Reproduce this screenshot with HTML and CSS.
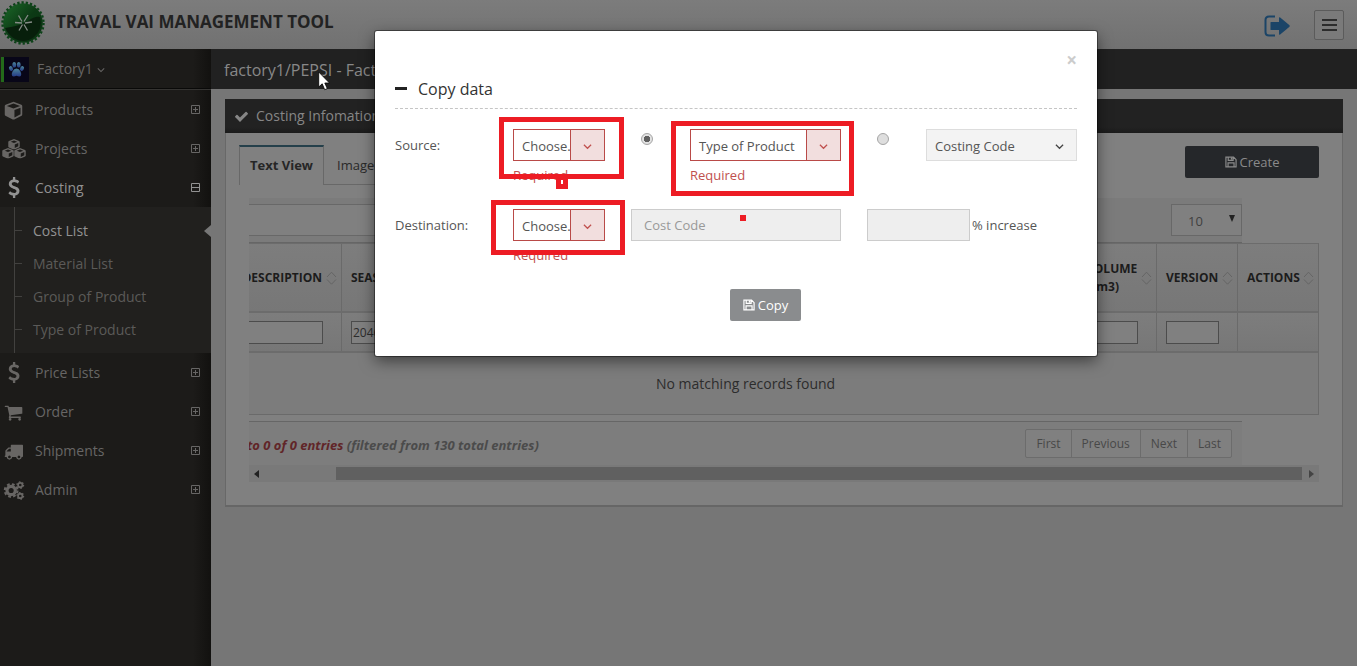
FILE: index.html
```
<!DOCTYPE html>
<html lang="en">
<head>
<meta charset="utf-8">
<title>Traval Vai Management Tool</title>
<link rel="stylesheet" href="styles.css">
</head>
<body>
<svg class="defs" aria-hidden="true">
  <symbol id="usd" viewBox="0 0 1792 1792"><path d="M1362 1185q0 153-99.500 263.500t-258.500 136.500v175q0 14-9 23t-23 9h-135q-13 0-22.500-9.500t-9.500-22.500v-175q-66-9-127.500-31t-101.500-44.500-74-48-46.500-37.500-17.500-18q-17-21-2-41l103-135q7-10 23-12 15-2 24 9l2 2q113 99 243 125 37 8 74 8 81 0 142.500-43t61.500-122q0-28-15-53t-33.500-42-58.500-37.500-66-32-80-32.500q-39-16-61.500-25t-61.500-26.500-62.500-31-56.500-35.500-53.500-42.500-43.500-49-35.500-58-21-66.500-8.500-78q0-138 98-242t255-134v-180q0-13 9.500-22.500t22.500-9.500h135q14 0 23 9t9 23v176q57 6 110.500 23t87 33.500 63.500 37.500 39 29 15 14q17 18 5 38l-81 146q-8 15-23 16-14 3-27-7-3-3-14.500-12t-39-26.500-58.500-32-74.500-26-85.500-11.500q-95 0-155 43t-60 111q0 26 8.500 48t29.500 41.500 39.500 33 56 31 60.500 27 70 27.500q53 20 81 31.500t76 35 75.500 42.500 62 50 53 63.500 31.500 76.500 13 94z"/></symbol>
  <symbol id="cart" viewBox="0 0 1792 1792"><path d="M704 1536q0 52-38 90t-90 38-90-38-38-90 38-90 90-38 90 38 38 90zm896 0q0 52-38 90t-90 38-90-38-38-90 38-90 90-38 90 38 38 90zm128-1088v512q0 24-16.500 42.500t-40.500 21.500l-1044 122q13 60 13 70 0 16-24 64h920q26 0 45 19t19 45-19 45-45 19h-1024q-26 0-45-19t-19-45q0-11 8-31.500t16-36 21.500-40 15.500-29.500l-177-823h-204q-26 0-45-19t-19-45 19-45 45-19h256q16 0 28.500 6.500t19.500 15.500 13 24.500 8 26 5.500 29.500 4.500 26h1201q26 0 45 19t19 45z"/></symbol>
  <symbol id="truck" viewBox="0 0 1792 1792"><path d="M640 1408q0-52-38-90t-90-38-90 38-38 90 38 90 90 38 90-38 38-90zm-384-512h384v-256h-158q-13 0-22 9l-195 195q-9 9-9 22v30zm1280 512q0-52-38-90t-90-38-90 38-38 90 38 90 90 38 90-38 38-90zm256-1088v1024q0 15-4 26.500t-13.500 18.500-16.500 11.500-23.500 6-22.500 2-25.500 0-22.500-.5q0 106-75 181t-181 75-181-75-75-181h-384q0 106-75 181t-181 75-181-75-75-181h-64q-3 0-22.500.5t-25.500 0-22.500-2-23.500-6-16.500-11.500-13.500-18.500-4-26.500q0-26 19-45t45-19v-320q0-8-.5-35t0-38 2.500-34.500 6.500-37 14-30.500 22.500-30l198-198q19-19 50.500-32t58.500-13h160v-192q0-26 19-45t45-19h1024q26 0 45 19t19 45z"/></symbol>
  <symbol id="check" viewBox="0 0 1792 1792"><path d="M1671 566q0 40-28 68l-724 724-136 136q-28 28-68 28t-68-28l-136-136-362-362q-28-28-28-68t28-68l136-136q28-28 68-28t68 28l294 295 656-657q28-28 68-28t68 28l136 136q28 28 28 68z"/></symbol>
  <symbol id="cube" viewBox="0 0 20 20"><path fill-rule="evenodd" d="M10 .8 18.300 3.900Q19.200 4.300 19.200 5.200V14.200Q19.200 15 18.500 15.400L10.800 19.400Q10 19.800 9.200 19.400L1.500 15.400Q.8 15 .8 14.200V5.200Q.8 4.300 1.700 3.900ZM10 2.700 3 5.300 10 7.900 17 5.300ZM11 17.300 17.400 14V7.100L11 9.500Z"/></symbol>
  <symbol id="smallcube" viewBox="0 0 12 11"><path fill-rule="evenodd" d="M6 0 11.300 2.100 12 3V8.200L11.400 9 6.600 11H5.400L.6 9 0 8.200V3L.7 2.100ZM6 1.500 2.600 2.900 6 4.300 9.400 2.900ZM6.800 9.300 10.500 7.700V4.300L6.800 5.800Z"/></symbol>
  <symbol id="cogs" viewBox="0 0 22 20"><g fill="none" stroke="currentColor"><circle cx="8" cy="10" r="4.400" stroke-width="3.400"/><circle cx="8" cy="10" r="6.700" stroke-width="2.200" stroke-dasharray="2.900 2.362"/><circle cx="17.600" cy="4.300" r="2.300" stroke-width="1.900"/><circle cx="17.600" cy="4.300" r="3.500" stroke-width="1.300" stroke-dasharray="1.600 2.065"/><circle cx="17.600" cy="15.700" r="2.300" stroke-width="1.900"/><circle cx="17.600" cy="15.700" r="3.500" stroke-width="1.300" stroke-dasharray="1.600 2.065"/></g></symbol>
  <symbol id="plus" viewBox="0 0 11 11"><path fill="none" stroke="currentColor" d="M1.500 1.500H9.500V9.500H1.500ZM3 5.500H8M5.500 3V8"/></symbol>
  <symbol id="minus" viewBox="0 0 11 11"><path fill="none" stroke="currentColor" d="M1.500 1.500H9.500V9.500H1.500ZM2 5.500H9"/></symbol>
  <symbol id="save" viewBox="0 0 13 12"><path fill="none" stroke="currentColor" stroke-width="1.300" d="M1 .8H9.300L12 3.500V11.200H1ZM3.300 11V7H9.800V11M3.500 1V4.200H8.800V1"/><path d="M6.300 1H8V3.500H6.300Z"/></symbol>
  <symbol id="down" viewBox="0 0 10 7"><path fill="none" stroke="currentColor" stroke-width="1.350" d="M1 1.500 5 5.500 9 1.500"/></symbol>
  <symbol id="sort" viewBox="0 0 11 14"><path fill="none" stroke="currentColor" d="M1 6 5.500 1.200 10 6M1 8.500 5.500 13.200 10 8.500"/></symbol>
</svg>

<header class="top">
  <svg class="logo" viewBox="0 0 44 44"><defs><linearGradient id="seal" x1="0" y1="0" x2="1" y2="1"><stop offset="0" stop-color="#1c6a29"/><stop offset=".5" stop-color="#0c3915"/><stop offset="1" stop-color="#0a3210"/></linearGradient></defs><circle cx="22" cy="22" r="19.800" fill="url(#seal)"/><circle cx="22" cy="22" r="20.500" fill="none" stroke="#0d4219" stroke-width="2.400" stroke-dasharray="2.300 1.993"/><path fill="#071f0b" d="M4 27Q20 25 27 20T39 16Q42 29 33 36T14 38Q7 34 4 27Z"/><g stroke="#858b86" stroke-width="1.300"><path d="M14 21.500 21 22M24 22 31 21M17.500 14.500 21 20.500M27 14 23 20.500M18 29.500 21.500 23.500M26.500 29.500 23 23.500"/></g></svg>
  <h1>TRAVAL VAI MANAGEMENT TOOL</h1>
  <svg class="logout" viewBox="0 0 26 22"><path fill="none" stroke="currentColor" stroke-width="2" d="M11 1.500H5Q1.500 1.500 1.500 5V17Q1.500 20.500 5 20.500H11"/><path fill="currentColor" d="M7 7H15V3Q15 1.800 16.200 2.500L25.500 10.300Q26 11 25.500 11.700L16.200 19.500Q15 20.200 15 19V15H7Q6.500 15 6.500 14.500V7.500Q6.500 7 7 7Z"/></svg>
  <button class="burger"><i></i><i></i><i></i></button>
</header>

<div class="page">
  <nav class="side">
    <div class="user">
      <svg class="paw" viewBox="0 0 25 25"><defs><linearGradient id="pawg" x1="0" y1="0" x2="0" y2="1"><stop offset="0" stop-color="#4c8698"/><stop offset="1" stop-color="#253a87"/></linearGradient></defs><rect width="25" height="25" fill="#080618"/><g fill="url(#pawg)"><ellipse cx="7" cy="11.500" rx="1.900" ry="2.600" transform="rotate(-25 7 11.500)"/><ellipse cx="10.300" cy="7.800" rx="1.900" ry="2.800"/><ellipse cx="14.800" cy="7.800" rx="1.900" ry="2.800"/><ellipse cx="18" cy="11.500" rx="1.900" ry="2.600" transform="rotate(25 18 11.500)"/><path d="M12.500 11.500Q15 11.500 16.500 14.500T16.800 19Q15.500 20 12.500 18.800 9.500 20 8.200 19 7 17.500 8.500 14.500T12.500 11.500Z"/></g></svg>
      <span>Factory1</span><svg class="caret"><use href="#down"/></svg>
    </div>
    <a class="item"><svg class="ic"><use href="#cube"/></svg><span>Products</span><svg class="tog"><use href="#plus"/></svg></a>
    <a class="item"><svg class="ic cubes" viewBox="0 0 24 20"><use href="#smallcube" x="6" y="0" width="12" height="10.500"/><use href="#smallcube" x="0" y="9" width="12" height="10.500"/><use href="#smallcube" x="12" y="9" width="12" height="10.500"/></svg><span>Projects</span><svg class="tog"><use href="#plus"/></svg></a>
    <a class="item on"><svg class="ic usd"><use href="#usd"/></svg><span>Costing</span><svg class="tog"><use href="#minus"/></svg></a>
    <div class="sub">
      <a class="cur">Cost List</a><a>Material List</a><a>Group of Product</a><a>Type of Product</a>
    </div>
    <a class="item"><svg class="ic usd"><use href="#usd"/></svg><span>Price Lists</span><svg class="tog"><use href="#plus"/></svg></a>
    <a class="item"><svg class="ic"><use href="#cart"/></svg><span>Order</span><svg class="tog"><use href="#plus"/></svg></a>
    <a class="item"><svg class="ic"><use href="#truck"/></svg><span>Shipments</span><svg class="tog"><use href="#plus"/></svg></a>
    <a class="item"><svg class="ic cogs"><use href="#cogs"/></svg><span>Admin</span><svg class="tog"><use href="#plus"/></svg></a>
  </nav>

  <main>
    <div class="crumb">factory1/PEPSI - Factory1</div>
    <section class="panel">
      <div class="panel-head"><svg><use href="#check"/></svg>Costing Infomation</div>
      <div class="panel-body">
        <div class="bar">
          <div class="tabs"><a class="tab on">Text View</a><a class="tab">Image View</a></div>
          <button class="create"><svg><use href="#save"/></svg>Create</button>
        </div>
        <div class="scroll">
          <div class="tools"><div class="search"></div><div class="len"><span>10</span><i></i></div></div>
          <div class="grid head">
            <div class="desc">DESCRIPTION<svg><use href="#sort"/></svg></div><div>SEASON<svg><use href="#sort"/></svg></div><div class="vol"><span>VOLUME<br>(cm3)</span><svg><use href="#sort"/></svg></div><div>VERSION<svg><use href="#sort"/></svg></div><div>ACTIONS<svg><use href="#sort"/></svg></div>
          </div>
          <div class="grid filter">
            <div class="desc"><b></b></div><div><b>2046</b></div><div><b></b></div><div><b></b></div><div></div>
          </div>
          <div class="empty">No matching records found</div>
          <div class="foot">
            <p><em>to 0 of 0 entries</em> (filtered from 130 total entries)</p>
            <div class="pages"><a>First</a><a>Previous</a><a>Next</a><a>Last</a></div>
          </div>
          <div class="sbar"><i class="l"></i><div class="thumb"></div><i class="r"></i></div>
        </div>
      </div>
    </section>
  </main>
</div>

<div class="modal">
  <div class="close">×</div>
  <h2><i></i>Copy data</h2>
  <div class="row">
    <label>Source:</label>
    <div class="field"><div class="select bad"><span>Choose.</span><div><svg><use href="#down"/></svg></div></div><p>Required</p></div>
    <div class="radio checked"></div>
    <div class="field"><div class="select bad wide"><span>Type of Product</span><div><svg><use href="#down"/></svg></div></div><p>Required</p></div>
    <div class="radio"></div>
    <div class="select off"><span>Costing Code</span><div><svg><use href="#down"/></svg></div></div>
  </div>
  <div class="row">
    <label>Destination:</label>
    <div class="field"><div class="select bad"><span>Choose.</span><div><svg><use href="#down"/></svg></div></div><p>Required</p></div>
    <div class="input code">Cost Code</div>
    <div class="input pct"></div><span class="inc">% increase</span>
  </div>
  <button class="copy"><svg><use href="#save"/></svg>Copy</button>
</div>

<div class="mark m1"></div><div class="mark m2"></div><div class="mark m3"></div><div class="mark m4"></div><div class="mark m5"></div>
<svg class="pointer" viewBox="0 0 12 20"><path fill="#fff" stroke="#000" stroke-width=".8" d="M.7 1V16L4.200 12.800 6.700 18.700 9.300 17.600 6.800 12H11.500Z"/></svg>
</body>
</html>
```
FILE: styles.css
```
* { box-sizing: border-box; }
body { margin: 0; width: 1357px; height: 666px; overflow: hidden; position: relative; font: 13px/18px "Open Sans", sans-serif; color: #2c2c2c; background: #767676; }
h1, h2, p { margin: 0; }
svg { display: block; fill: currentColor; flex: none; }
button { font: inherit; border: 0; padding: 0; }
.defs { position: absolute; width: 0; height: 0; }

.top { height: 49px; display: flex; align-items: center; background: linear-gradient(#7c7c7c, #717171); }
.logo { width: 44px; height: 44px; margin: -4px 0 0 1px; }
.top h1 { margin: -6px 0 0 11px; font-size: 17px; line-height: 24px; font-weight: 700; color: #222; }
.logout { width: 26px; height: 22px; margin: 2px 24px 0 auto; color: #1b4467; }
.burger { width: 30px; height: 30px; margin: 1px 13px 0 0; border: 1px solid #5b5b5b; border-radius: 2px; background: #7a7a7a; display: flex; flex-direction: column; align-items: center; justify-content: center; gap: 3px; }
.burger i { width: 15px; height: 2px; background: #2c2c2c; }

.page { display: flex; height: 617px; }
.side { width: 211px; background: linear-gradient(90deg, transparent 193px, #12110f), #1c1b19; color: #676665; font-size: 14px; }
.user { height: 41px; display: flex; align-items: center; border-bottom: 1px solid #353432; box-shadow: inset 0 -1px #090908; }
.paw { width: 28px; height: 25px; border-left: 3px solid #236a1a; margin-left: 1px; }
.user span { margin-left: 8px; }
.caret { width: 8px; height: 6px; margin: 1px 0 0 4px; }
.item { height: 39px; display: flex; align-items: center; }
.ic { width: 19px; height: 19px; margin: 1px 12px 0 4px; color: #686664; }
.cubes { width: 24px; height: 20px; margin: 1px 9px 0 2px; }
.usd { width: 22px; height: 21px; margin: 0 10px 0 3px; }
.cogs { width: 22px; margin: 1px 10px 0 3px; }
.item .tog { width: 11px; height: 11px; margin: 0 10px 0 auto; }
.on, .on .ic { color: #929292; }
.sub { position: relative; height: 146px; padding-top: 7px; background: #21201e; border-left: 14px solid #21201e; }
.sub::before { content: ""; position: absolute; left: 0; top: 0; bottom: 0; border-left: 1px solid #42413f; }
.sub a { height: 33px; display: flex; align-items: center; color: #5b5a58; }
.sub a::before { content: ""; width: 8px; height: 1px; margin-right: 11px; background: #42413f; }
.sub .cur { color: #929292; }
.sub .cur::after { content: ""; margin-left: auto; border: solid transparent; border-width: 6px 7px 6px 0; border-right-color: #777; }

main { flex: 1; }
.crumb { height: 40px; padding: 9px 13px; font-size: 16px; line-height: 24px; background: #212121; color: #888; }
.panel { margin: 10px 14px 0; height: 408px; display: flex; flex-direction: column; border-bottom: 2px solid #666; }
.panel-head { height: 34px; padding-left: 9px; display: flex; align-items: center; background: linear-gradient(#222 28px, #1b1b1b); color: #868686; font-size: 14px; }
.panel-head svg { width: 15px; height: 15px; margin-right: 7px; }
.panel-body { flex: 1; border: solid #686868; border-width: 0 1px; background: #808080; padding: 12px 23px 0 13px; }
.bar { height: 53px; display: flex; justify-content: space-between; align-items: flex-start; }
.tabs { width: 720px; height: 40px; display: flex; border-bottom: 1px solid #686868; }
.tab { height: 39px; padding: 11px 13px 0; color: #292929; }
.tabs .tab.on { height: 40px; width: 85px; padding: 9px 0 0 10px; font-weight: 700; color: #262626; background: #808080; border: solid #686868; border-width: 0 1px; border-top: 2px solid #243f4a; }
.create { width: 134px; height: 32px; margin-top: 1px; border-radius: 2px; background: #25272a; color: #8a8a8a; display: flex; align-items: center; justify-content: center; gap: 3px; }
.create svg, .copy svg { width: 12px; height: 12px; }
.scroll { width: 1070px; margin-left: 10px; overflow: hidden; }
.tools { width: 993px; height: 45px; padding-top: 6px; display: flex; justify-content: space-between; background: #7b7b7b; border-bottom: 1px solid #666; }
.search { width: 240px; height: 32px; background: #808080; border: solid #686868; border-width: 1px 0; }
.len { width: 71px; height: 32px; padding: 2px 6px 0 16px; border: 1px solid #686868; background: #808080; display: flex; align-items: center; justify-content: space-between; color: #404040; }
.len i { border: solid transparent; border-width: 7px 3.500px 0; border-top-color: #222; margin-top: -5px; }
.grid { display: grid; grid-template-columns: 92px 700px 115px 81px 81px; border-right: 1px solid #6a6a6a; background: linear-gradient(#7d7d7d, #777); }
.grid > div { border-left: 1px solid #6a6a6a; padding-left: 9px; display: flex; align-items: center; }
.grid > .desc { border: 0; padding: 0; }
.head { height: 70px; border-top: 1px solid #6c6c6c; border-bottom: 2px solid #6c6c6c; font-size: 12px; font-weight: 700; color: #1c1c1c; }
.head svg { width: 11px; height: 14px; margin: 0 4px 0 auto; color: #656565; }
.head .desc { justify-content: flex-end; }
.head .desc svg { margin-left: 4px; }
.head .vol { padding-left: 44px; line-height: 18px; }
.filter { height: 40px; border-bottom: 2px solid #6c6c6c; }
.filter b { font-weight: 400; height: 23px; width: 53px; border: 1px solid #4c4c4c; background: #808080; padding: 1px; font-size: 12px; line-height: 20px; }
.filter .desc b { width: 74px; border-left: 0; }
.filter > div:nth-child(3) b { width: 87px; }
.empty { height: 62px; border: solid #6a6a6a; border-width: 0 1px 1px 0; background: #7c7c7c; font-size: 14px; line-height: 62px; padding-left: 407px; }
.foot { width: 993px; height: 44px; margin-top: 6px; padding: 7px 10px 0 0; border-top: 1px solid #666; background: #7d7d7d; display: flex; justify-content: space-between; }
.foot p { padding-top: 7px; font-weight: 700; font-style: italic; color: #4b4b4b; margin-left: -2px; }
.foot em { color: #612528; }
.pages { height: 29px; display: flex; border: 1px solid #6c6c6c; border-radius: 2px; font-size: 12px; line-height: 27px; background: #808080; color: #484848; }
.pages a { padding: 0 10px; border-left: 1px solid #6c6c6c; }
.pages a:first-child { border: 0; }
.sbar { height: 17px; background: #797979; padding: 2px 5px; display: flex; align-items: center; }
.sbar i { border: 4px solid transparent; }
.sbar .l { border-width: 4px 5px 4px 0; border-right-color: #222; }
.sbar .r { border-width: 4px 0 4px 5px; border-left-color: #444; margin-left: 7px; }
.thumb { width: 966px; height: 13px; margin-left: 77px; background: #606060; }

.modal { position: absolute; left: 375px; top: 31px; width: 722px; height: 325px; padding: 19px 20px; border-radius: 2px; background: #fff; color: #555; box-shadow: 0 0 0 1px rgba(0,0,0,.4), 0 5px 15px rgba(0,0,0,.5); }
.close { height: 20px; text-align: right; font-size: 19px; line-height: 21px; font-weight: 700; color: #ccc; }
.modal h2 { height: 39px; padding-top: 8px; border-bottom: 1px dashed #c5c5c5; font-size: 16px; line-height: 22px; font-weight: 400; color: #333; display: flex; }
.modal h2 i { width: 12px; height: 3px; margin: 9px 11px 0 0; background: #222; }
.row { height: 80px; padding-top: 20px; display: flex; align-items: flex-start; }
.row label { width: 118px; padding-top: 7px; }
.select { width: 92px; height: 32px; border: 1px solid #b94a48; display: flex; background: #fff; color: #555; }
.select span { flex: 1; white-space: nowrap; padding: 7px 0 0 8px; }
.select div { width: 34px; flex: none; border-left: 1px solid #b94a48; background: #f2dede; color: #c0504e; display: flex; align-items: center; justify-content: center; }
.select span { min-width: 0; }
.select svg { width: 9px; height: 7px; margin-top: 2px; }
.select.wide, .select.off { width: 151px; }
.select.off { border-color: #ddd; background: #f3f3f3; color: #555; }
.select.off div { border: 0; background: none; color: #444; }
.field p { padding-top: 5px; color: #c0504e; }
.radio { width: 12px; height: 12px; margin: 4px 37px 0 36px; border: 1px solid #a5a5a5; border-radius: 50%; background: #dedede; }
.radio.checked { background: radial-gradient(circle, #606060 3px, #e2e2e2 3.500px); }
.input { height: 32px; border: 1px solid #ccc; background: #eee; padding: 6px 12px; color: #999; }
.code { width: 210px; margin: 0 26px; }
.pct { width: 103px; margin-right: 2px; }
.inc { padding-top: 7px; }
.copy { width: 71px; height: 32px; margin: 20px 0 0 335px; border-radius: 2px; background: #8a8c8e; color: #fff; display: flex; align-items: center; justify-content: center; gap: 3px; }

/* Annotations drawn over the dialog */
.mark { position: absolute; border: 5px solid #ed1c24; }
.m1 { left: 499px; top: 117px; width: 125px; height: 62px; }
.m2 { left: 671px; top: 121px; width: 183px; height: 75px; }
.m3 { left: 491px; top: 200px; width: 134px; height: 55px; }
.m4 { left: 556px; top: 175px; width: 12px; height: 14px; }
.m5 { left: 740px; top: 215px; width: 6px; height: 6px; border-width: 3px; }
.pointer { position: absolute; left: 318px; top: 71px; width: 12px; height: 20px; }
```
